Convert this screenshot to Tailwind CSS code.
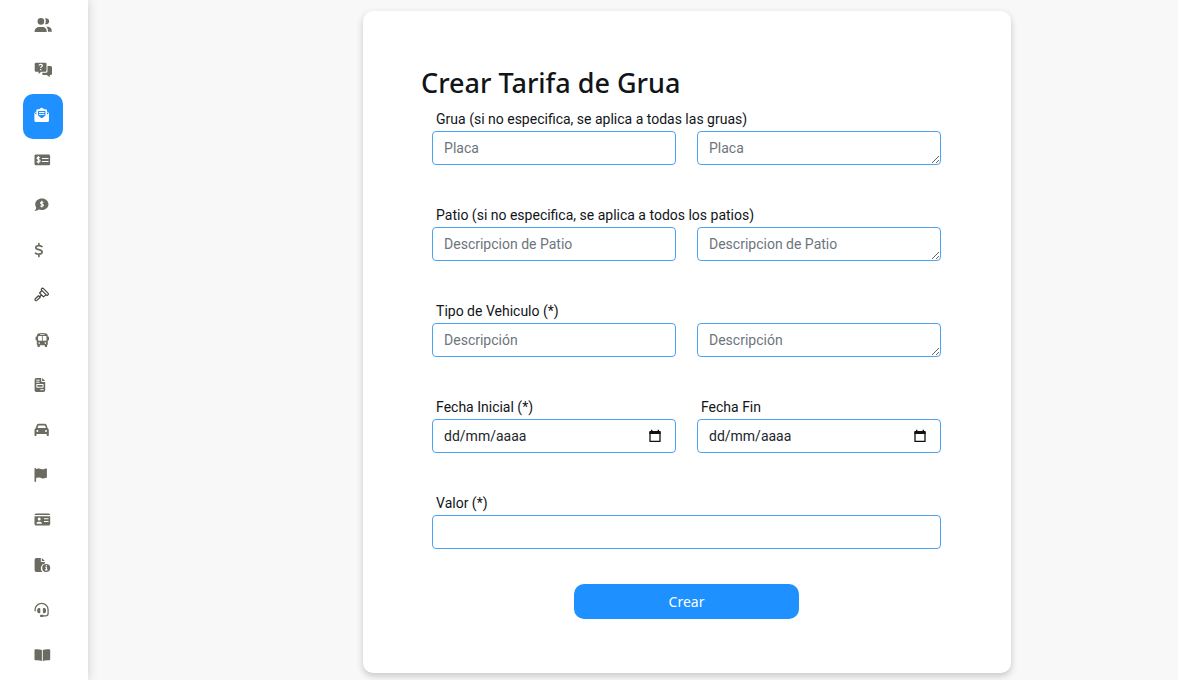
<!DOCTYPE html>
<html lang="es">
<head>
    <meta charset="UTF-8">
    <meta name="viewport" content="width=device-width, initial-scale=1.0">
    <title>Crear Tarifa de Grua</title>
    <script src="https://cdn.jsdelivr.net/npm/@tailwindcss/browser@4"></script>
</head>
<body class="bg-[#f8f8f8] font-[Roboto,sans-serif] text-[#111518]">
    <div class="flex min-h-screen">
        <!-- Menu lateral -->
        <nav class="relative w-[88px] shrink-0 bg-white pt-1 pl-[23px] text-[#6b6b61] shadow-[0_0_10px_rgba(0,0,0,0.18)]">
            <a href="#" aria-label="Usuarios" class="flex h-[45px] w-10 items-center rounded-[10px] pb-[3px] pl-[11px]">
                <svg class="h-4 w-[18px]" viewBox="0 0 18 16" fill="currentColor"><circle cx="6.9" cy="4.4" r="3.3"/><path d="M.6 15v-.7c0-2.600 2.200-4.300 4.600-4.300h3.400c2.400 0 4.100 1.700 4.100 4.300v.7zM11 1.600a3 3 0 1 1 0 5.500c.6-.8.800-1.700.800-2.700S11.600 2.400 11 1.600zM12.200 9.800h1.500c2.300 0 4.100 1.900 4.100 4.200v.8h-3.900c.2-2-.3-3.800-1.700-5z"/></svg>
            </a>
            <a href="#" aria-label="Preguntas" class="flex h-[45px] w-10 items-center rounded-[10px] pb-[3px] pl-[11px]">
                <svg class="h-4 w-[18px]" viewBox="0 0 18 16" fill="currentColor"><path d="M2 .8h9.200q1.300 0 1.300 1.300v6.400q0 1.300-1.300 1.300H7.300L4.500 12V9.800H2Q.7 9.800.7 8.500V2.100Q.7.800 2 .8z"/><path d="M13.500 4h3q1.500 0 1.500 1.500v6q0 1.500-1.500 1.500h-.8v2.300L12.900 13H9.700q-1.500 0-1.500-1.500v-.7h3.700q1.600 0 1.600-1.600z"/><path d="M5 3.500q.2-1.200 1.700-1.200 1.700 0 1.700 1.300 0 .8-.9 1.200-.8.300-.8 1.100M6.700 7v1.300" fill="none" stroke="#fff" stroke-width="1.200"/></svg>
            </a>
            <a href="#" aria-label="Tarifas de grua" aria-current="page" class="flex h-[45px] w-10 items-center rounded-[10px] bg-[#1e90ff] pb-[3px] pl-[11px] text-white">
                <svg class="h-4 w-[18px]" viewBox="0 0 18 16" fill="currentColor"><path d="M.4 6 2.400 4.500V3.500Q2.400 2.300 3.600 2.300H5.300L6.800 1.100q.9-.7 1.800 0l1.500 1.200h1.700q1.200 0 1.200 1.200v1l2 1.500v7.500q0 1.500-1.500 1.500H1.900Q.4 15 .4 13.500z"/><path d="M4 4h7.400v4.500L8.700 10.700q-1 .8-2 0L4 8.500z" fill="#1e90ff"/><path d="M.9 6.300 2.400 5.300V7.400L1 6.600zM14.500 6.300 13 5.300V7.400L14.400 6.600z" fill="#1e90ff"/><path d="M5 5.500h5.400M5 7.500h5.400" stroke="#fff" stroke-width="1"/></svg>
            </a>
            <a href="#" aria-label="Cheques" class="flex h-[45px] w-10 items-center rounded-[10px] pb-[3px] pl-[11px]">
                <svg class="h-4 w-[18px]" viewBox="0 0 18 16" fill="currentColor"><rect x=".5" y="2.500" width="15.600" height="10.800" rx="1.400"/><path d="M5.800 5.900Q5.300 5.300 4.300 5.300q-1.300 0-1.300 1 0 .9 1.500 1.200 1.600.4 1.600 1.500T4.500 10.100Q3.300 10.100 2.800 9.400M4.400 4v7.600" fill="none" stroke="#fff" stroke-width="1.100"/><path d="M8 6.500h6.500M8 9.500h6.500" stroke="#fff" stroke-width="1.200"/></svg>
            </a>
            <a href="#" aria-label="Cobros" class="flex h-[45px] w-10 items-center rounded-[10px] pb-[3px] pl-[11px]">
                <svg class="h-4 w-[18px]" viewBox="0 0 18 16" fill="currentColor"><path d="M7.900 1.500c3.800 0 6.600 2.600 6.600 5.800s-2.800 5.800-6.600 5.800c-1 0-2-.2-2.900-.5-1.200.8-2.700 1.300-4.600 1.300 1-.9 1.700-2 1.800-3.100C1.500 9.800 1.200 8.600 1.200 7.300c0-3.200 2.900-5.800 6.700-5.800z"/><path d="M9.300 5.500Q8.800 5 7.900 5q-1.300 0-1.300.9t1.300 1.200q1.500.3 1.500 1.200T7.900 9.500Q6.900 9.500 6.300 8.900M7.900 3.800v6.800" fill="none" stroke="#fff" stroke-width="1.100"/></svg>
            </a>
            <a href="#" aria-label="Valores" class="flex h-[45px] w-10 items-center rounded-[10px] pb-[3px] pl-[11px]">
                <svg class="h-4 w-[18px]" viewBox="0 0 18 16" fill="none" stroke="currentColor" stroke-width="1.700" stroke-linecap="round"><path d="M8 4.600Q6.700 3.700 4.800 3.700 1.800 3.700 1.800 5.500q0 1.600 3 2.200 3.300.6 3.300 2.400 0 2.100-3.300 2.100-1.900 0-3.300-1M4.900 1.700v1.800M4.900 12.400v2"/></svg>
            </a>
            <a href="#" aria-label="Subastas" class="flex h-[45px] w-10 items-center rounded-[10px] pb-[3px] pl-[11px]">
                <svg class="h-4 w-[18px]" viewBox="0 0 18 16" fill="none" stroke="#45453f" stroke-width="1.200" stroke-linejoin="round" stroke-linecap="round"><path d="m8.200 1.200 1 .2 5 5 .2 1-.9.900-1-.2-5-5-.2-1zM7.900 3.500 5.600 6l3.900 3.900 2.500-2.200M7.500 8 6 9.500M4.500 8.700 1.300 11.800q-.7.800 0 1.600.8.700 1.600 0l3.300-3.200z"/></svg>
            </a>
            <a href="#" aria-label="Buses" class="flex h-[45px] w-10 items-center rounded-[10px] pb-[3px] pl-[11px]">
                <svg class="h-4 w-[18px]" viewBox="0 0 18 16" fill="currentColor"><path fill-rule="evenodd" d="M8.300 1c3.300 0 5.500.8 5.500 2.500v1h.4q.8 0 .8.800v2.500q0 .8-.8.800h-.4v3.400q0 .8-.7 1.200v1.200q0 .7-.7.700h-.9q-.7 0-.7-.7v-1.100H5.800v1.100q0 .7-.7.700h-.9q-.7 0-.7-.7v-1.200q-.7-.4-.7-1.200V8.600h-.4q-.8 0-.8-.8V5.300q0-.8.800-.8h.4v-1C2.800 1.800 5 1 8.300 1zM4.900 3.900q-.8 0-.8.800v3.200q0 .8.800.8h3V3.900zm3.800 0v4.800h3q.8 0 .8-.8V4.700q0-.8-.8-.8zM5.200 10.300a.8.800 0 1 0 0 1.600.8.800 0 0 0 0-1.600zm6.200 0a.8.800 0 1 0 0 1.600.8.800 0 0 0 0-1.600zM6.200 2.300v.6h4.200v-.6z"/></svg>
            </a>
            <a href="#" aria-label="Facturas" class="flex h-[45px] w-10 items-center rounded-[10px] pb-[3px] pl-[11px]">
                <svg class="h-4 w-[18px]" viewBox="0 0 18 16" fill="currentColor"><path d="M2.300 1h4.900v3.100q0 .9.900.9h3.100v8.300q0 1.700-1.700 1.700H2.300Q.6 15 .6 13.300V2.700Q.6 1 2.300 1zM8.100 1l3.100 3.100H8.100z"/><path d="M2.300 3.200h3.200M2.300 5.200h3.200M6.400 12.700h3.200" stroke="#fff"/><rect x="2.900" y="7.500" width="6.100" height="2.700" fill="none" stroke="#fff"/></svg>
            </a>
            <a href="#" aria-label="Vehiculos" class="flex h-[45px] w-10 items-center rounded-[10px] pb-[3px] pl-[11px]">
                <svg class="h-4 w-[18px]" viewBox="0 0 18 16" fill="currentColor"><path fill-rule="evenodd" d="M4.700 1.700h6q1.400 0 1.900 1.400L13.700 6.300q1.100.5 1.100 1.800v5.200q0 .7-.7.700h-.7q-.7 0-.7-.7v-1.400H2.500v1.400q0 .7-.7.700h-.6q-.7 0-.7-.7V8.100q0-1.300 1.100-1.800L2.800 3.100q.5-1.400 1.900-1.400zm.1 1.700q-.4 0-.5.400l-.8 2.200h8.400l-.8-2.200q-.1-.4-.5-.4zM3.400 8a1 1 0 1 0 0 2 1 1 0 0 0 0-2zM12 8a1 1 0 1 0 0 2 1 1 0 0 0 0-2z"/></svg>
            </a>
            <a href="#" aria-label="Marcas" class="flex h-[45px] w-10 items-center rounded-[10px] pb-[3px] pl-[11px]">
                <svg class="h-4 w-[18px]" viewBox="0 0 18 16" fill="currentColor"><path d="M1.300.9q.8 0 .8.800v.3l2-.5q1.500-.3 3 .4t3 .2l1.800-.6q1-.3 1 .6v7.800q0 .5-.5.800l-1.200.4q-2 .7-3.900-.2-1.500-.7-3.100-.3l-2.100.5v3.100q0 .8-.8.800t-.8-.8V1.700q0-.8.800-.8z"/></svg>
            </a>
            <a href="#" aria-label="Licencias" class="flex h-[45px] w-10 items-center rounded-[10px] pb-[3px] pl-[11px]">
                <svg class="h-4 w-[18px]" viewBox="0 0 18 16" fill="currentColor"><path d="M2 1.500h12.600q1.600 0 1.600 1.600H.5Q.5 1.500 2 1.500zM.5 4.200h15.700v7.900q0 1.500-1.600 1.500H2Q.5 13.600.5 12.100z"/><circle cx="5.200" cy="7.100" r="1.500" fill="#fff"/><path d="M2.400 11.700q.1-2 1.900-2h1.800q1.800 0 1.900 2zM10 6.200h4.500v1H10zM10 8.900h4.500v1H10z" fill="#fff"/></svg>
            </a>
            <a href="#" aria-label="Informes" class="flex h-[45px] w-10 items-center rounded-[10px] pb-[3px] pl-[11px]">
                <svg class="h-4 w-[18px]" viewBox="0 0 18 16" fill="currentColor"><path d="M2.300 1h4.500v3.200q0 .8.900.8h3.200v1.500A4.900 4.900 0 0 0 8.400 15H2.300Q.6 15 .6 13.300V2.700Q.6 1 2.300 1zM7.800 1l3.100 3.100H7.800z"/><circle cx="12.200" cy="10.900" r="4"/><path d="M12.300 8v1.300M11.300 10.300h1.100v2.600M11 12.900h2.600" fill="none" stroke="#fff" stroke-width="1.100"/></svg>
            </a>
            <a href="#" aria-label="Soporte" class="flex h-[45px] w-10 items-center rounded-[10px] pb-[3px] pl-[11px]">
                <svg class="h-4 w-[18px]" viewBox="0 0 18 16" fill="currentColor"><path d="M1.100 8.800V7.700a6.500 6.300 0 0 1 13 0v3.800q0 2.300-2.300 2.300H8.500" fill="none" stroke="currentColor" stroke-width="1.300" stroke-linecap="round"/><path d="M5 6h.5q.8 0 .8.800v3.600q0 .8-.8.800H5q-1.800 0-1.800-1.800V7.800Q3.200 6 5 6zM10.200 6h-.5q-.8 0-.8.800v3.600q0 .8.800.8h.5q1.800 0 1.800-1.800V7.800Q12 6 10.200 6z"/><rect x="5.900" y="12.800" width="3.700" height="2.200" rx="1.100"/></svg>
            </a>
            <a href="#" aria-label="Manual" class="flex h-[45px] w-10 items-center rounded-[10px] pb-[3px] pl-[11px]">
                <svg class="h-4 w-[18px]" viewBox="0 0 18 16" fill="currentColor"><path d="M7.900 3.100v11Q5.300 13 1.600 13.300q-1.100.1-1.100-1V3.200q0-.8.900-.9 4-.4 6.500.8zM8.800 3.100v11q2.600-1.100 6.300-.8 1.100.1 1.100-1V3.200q0-.8-.9-.9-4-.4-6.500.8z"/></svg>
            </a>
        </nav>

        <!-- Formulario -->
        <main class="flex flex-1 items-start justify-center pt-[11px] pb-[7px] pl-[108px]">
            <section class="w-[55vw] rounded-[10px] bg-white px-[58px] pt-14 pb-[54px] shadow-[0_3px_7px_rgba(0,0,0,0.2)]">
                <h1 class="pb-2 font-['Noto_Sans',sans-serif] text-[27px] leading-8 font-medium">Crear Tarifa de Grua</h1>
                <form class="pr-3 pl-[11px] text-sm">
                    <div class="grid grid-cols-2 gap-x-[21px] gap-y-[38px]">
                        <div>
                            <label for="grua" class="block pl-1 leading-6 whitespace-nowrap">Grua (si no especifica, se aplica a todas las gruas)</label>
                            <input id="grua" type="text" placeholder="Placa" class="block h-[34px] w-full rounded border border-[#4ba3f5] bg-white px-[11px] placeholder:text-[#6c757d]">
                        </div>
                        <textarea rows="1" aria-label="Placa" placeholder="Placa" class="block h-[34px] w-full self-end overflow-hidden rounded border border-[#4ba3f5] bg-white px-[11px] py-1 leading-6 placeholder:text-[#6c757d]"></textarea>
                        <div>
                            <label for="patio" class="block pl-1 leading-6 whitespace-nowrap">Patio (si no especifica, se aplica a todos los patios)</label>
                            <input id="patio" type="text" placeholder="Descripcion de Patio" class="block h-[34px] w-full rounded border border-[#4ba3f5] bg-white px-[11px] placeholder:text-[#6c757d]">
                        </div>
                        <textarea rows="1" aria-label="Descripcion de Patio" placeholder="Descripcion de Patio" class="block h-[34px] w-full self-end overflow-hidden rounded border border-[#4ba3f5] bg-white px-[11px] py-1 leading-6 placeholder:text-[#6c757d]"></textarea>
                        <div>
                            <label for="tipo" class="block pl-1 leading-6">Tipo de Vehiculo (*)</label>
                            <input id="tipo" type="text" placeholder="Descripción" class="block h-[34px] w-full rounded border border-[#4ba3f5] bg-white px-[11px] placeholder:text-[#6c757d]">
                        </div>
                        <textarea rows="1" aria-label="Descripción" placeholder="Descripción" class="block h-[34px] w-full self-end overflow-hidden rounded border border-[#4ba3f5] bg-white px-[11px] py-1 leading-6 placeholder:text-[#6c757d]"></textarea>
                        <div>
                            <label for="fechaInicial" class="block pl-1 leading-6">Fecha Inicial (*)</label>
                            <div class="flex h-[34px] items-center rounded border border-[#4ba3f5] bg-white pr-[13px] pl-[11px]">
                                <input id="fechaInicial" type="text" placeholder="dd/mm/aaaa" class="min-w-0 flex-1 outline-none placeholder:text-[#212529]">
                                <button type="button" aria-label="Abrir calendario">
                                    <svg class="size-[14px]" viewBox="0 0 14 14"><path d="M2 3.500h10v8.900H2z" fill="none" stroke="#111" stroke-width="1.300" stroke-linejoin="round"/><path d="M1.400 2h11.200v3H1.400zM3 .8h1.400V2H3zM9.600.8H11V2H9.600z" fill="#111"/></svg>
                                </button>
                            </div>
                        </div>
                        <div>
                            <label for="fechaFin" class="block pl-1 leading-6">Fecha Fin</label>
                            <div class="flex h-[34px] items-center rounded border border-[#4ba3f5] bg-white pr-[13px] pl-[11px]">
                                <input id="fechaFin" type="text" placeholder="dd/mm/aaaa" class="min-w-0 flex-1 outline-none placeholder:text-[#212529]">
                                <button type="button" aria-label="Abrir calendario">
                                    <svg class="size-[14px]" viewBox="0 0 14 14"><path d="M2 3.500h10v8.900H2z" fill="none" stroke="#111" stroke-width="1.300" stroke-linejoin="round"/><path d="M1.400 2h11.200v3H1.400zM3 .8h1.400V2H3zM9.600.8H11V2H9.600z" fill="#111"/></svg>
                                </button>
                            </div>
                        </div>
                        <div class="col-span-2">
                            <label for="valor" class="block pl-1 leading-6">Valor (*)</label>
                            <input id="valor" type="text" class="block h-[34px] w-full rounded border border-[#4ba3f5] bg-white px-[11px]">
                        </div>
                    </div>
                    <button type="submit" class="mx-auto mt-[35px] block h-[35px] w-[225px] rounded-[10px] bg-[#1e90ff] font-['Noto_Sans',sans-serif] text-sm text-white">Crear</button>
                </form>
            </section>
        </main>
    </div>
</body>
</html>
